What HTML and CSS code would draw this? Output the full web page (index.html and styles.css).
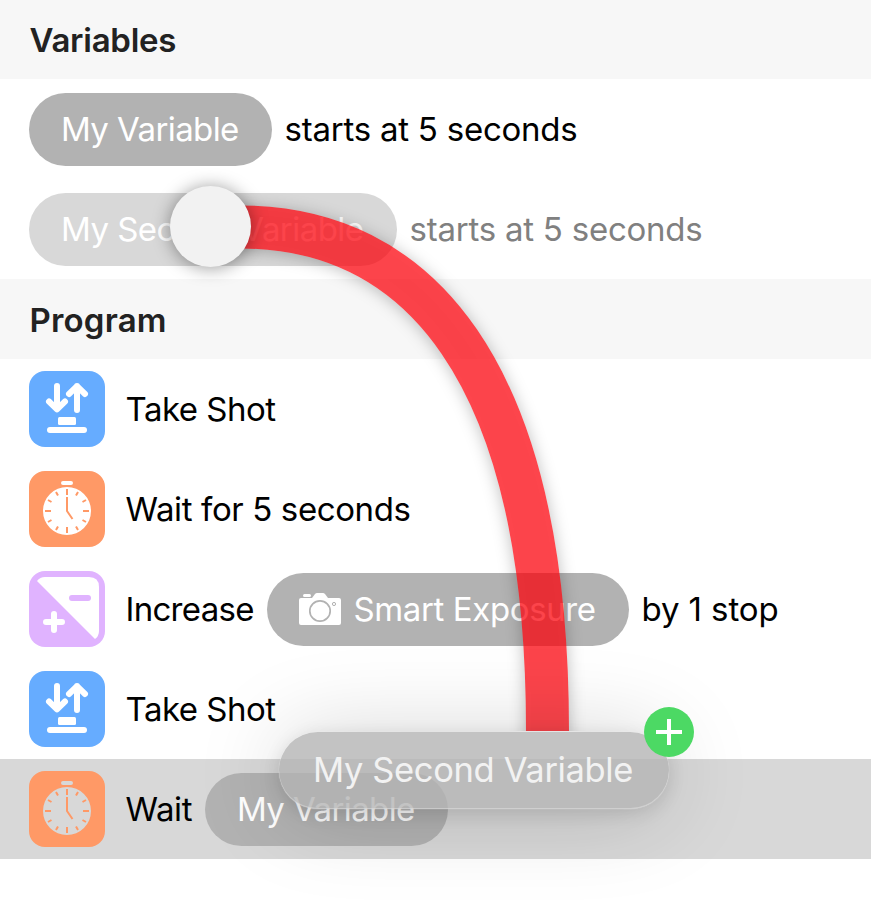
FILE: index.html
```html
<!DOCTYPE html>
<html lang="en">
<head>
<meta charset="utf-8">
<title>Variables</title>
<link rel="stylesheet" href="styles.css">
</head>
<body>
<svg class="defs" aria-hidden="true">
  <symbol id="shot" viewBox="0 0 76 76">
    <rect width="76" height="76" rx="16" fill="#66acff"/>
    <path d="M28 15v23M20 30.500L28 38.300L36 30.500M48 39V15M40 23L48 15.200L56 23" fill="none" stroke="#fff" stroke-width="6" stroke-linecap="round" stroke-linejoin="round"/>
    <rect x="29" y="46" width="18" height="8" rx="1.500" fill="#fff"/>
    <rect x="18" y="56" width="40" height="6" rx="3" fill="#fff"/>
  </symbol>
  <symbol id="timer" viewBox="0 0 76 76">
    <path fill="#ff9966" fill-rule="evenodd" d="M16 0H60A16 16 0 0 1 76 16V60A16 16 0 0 1 60 76H16A16 16 0 0 1 0 60V16A16 16 0 0 1 16 0ZM34 10a2 2 0 0 0 0 4h8a2 2 0 0 0 0-4ZM14 40a24 24 0 1 0 48 0a24 24 0 1 0-48 0Z"/>
    <g stroke="#ff9966" stroke-width="2" fill="none">
      <path d="M38 18v6M38 56v6M16 40h6M54 40h6"/>
      <path d="M27 21l2 3.500M49 21l-2 3.500M19 29l3.500 2M57 29l-3.500 2M19 51l3.500-2M57 51l-3.500-2M27 59l2-3.500M49 59l-2-3.500"/>
      <path d="M38 26V40L43.500 48" stroke-linejoin="round"/>
    </g>
  </symbol>
  <symbol id="exposure" viewBox="0 0 76 76">
    <rect width="76" height="76" rx="16" fill="#e0b3ff"/>
    <path d="M8 10Q11 6 16 6H60Q70 6 70 16V60Q70 65 66 68Z" fill="#fff"/>
    <path d="M43 27H59" stroke="#e0b3ff" stroke-width="6" stroke-linecap="round"/>
    <path d="M17 51H33M25 43V59" stroke="#fff" stroke-width="6" stroke-linecap="round"/>
  </symbol>
</svg>
<main class="screen">
  <h2 class="header">Variables</h2>
  <div class="row">
    <span class="pill pill-short"><span class="t-var">My Variable</span></span>
    <span class="label after t-start">starts at 5 seconds</span>
  </div>
  <div class="row lifted">
    <span class="pill pill-long"><span class="t-second">My Second Variable</span></span>
    <span class="label after t-start">starts at 5 seconds</span>
  </div>
  <h2 class="header program">Program</h2>
  <div class="row"><svg class="icon"><use href="#shot"/></svg><span class="label t-shot">Take Shot</span></div>
  <div class="row"><svg class="icon"><use href="#timer"/></svg><span class="label t-wait5">Wait for 5 seconds</span></div>
  <div class="row">
    <svg class="icon"><use href="#exposure"/></svg><span class="label t-inc">Increase</span>
    <span class="pill pill-smart">
      <svg class="camera" viewBox="0 0 42 32">
        <path fill="#fff" d="M2 5H13L16 1Q17 0 18 0H24Q25 0 26 1L29 5H40Q42 5 42 7V30Q42 32 40 32H2Q0 32 0 30V7Q0 5 2 5Z"/>
        <rect x="4" y="1" width="8" height="3" rx="1.500" fill="#fff"/>
        <circle cx="21" cy="18" r="10.200" fill="none" stroke="#b2b2b2" stroke-width="1.700"/>
        <circle cx="35" cy="11" r="1.600" fill="none" stroke="#b2b2b2" stroke-width="1"/>
      </svg>
      <span class="t-smart">Smart Exposure</span>
    </span>
    <span class="label after t-by">by 1 stop</span>
  </div>
  <div class="row"><svg class="icon"><use href="#shot"/></svg><span class="label t-shot">Take Shot</span></div>
  <div class="row target"><svg class="icon"><use href="#timer"/></svg><span class="label t-wait">Wait</span><span class="pill pill-short"><span class="t-var">My Variable</span></span></div>

  <svg class="trail" viewBox="0 0 871 914">
    <defs>
      <filter id="soft" x="-20%" y="-20%" width="140%" height="140%"><feGaussianBlur stdDeviation="8"/></filter>
      <clipPath id="above"><path d="M0 0H871V731H0Z"/></clipPath>
      <mask id="outside" maskUnits="userSpaceOnUse" x="0" y="0" width="871" height="914">
        <rect width="871" height="914" fill="#fff"/>
        <path d="M210 227H240C415 227 547.500 365 547.500 731V750" fill="none" stroke="#333" stroke-width="43"/>
      </mask>
    </defs>
    <g clip-path="url(#above)" fill="none" stroke-width="43">
      <g mask="url(#outside)"><path d="M210 229H240C415 229 547.500 367 547.500 731V750" stroke="#000" stroke-opacity=".25" filter="url(#soft)"/></g>
      <path d="M210 227H240C415 227 547.500 365 547.500 731" stroke="#ff000a" stroke-opacity=".72"/>
    </g>
  </svg>
  <div class="touch"></div>
  <div class="drag"><span class="t-drag">My Second Variable</span>
    <svg class="badge" viewBox="0 0 50 50"><circle cx="25" cy="25" r="25" fill="#4cd964"/><path d="M12 25H38M25 12V38" stroke="#fff" stroke-width="4"/></svg>
  </div>
</main>
</body>
</html>
```
FILE: styles.css
```css
* { box-sizing: border-box; }
body { margin: 0; background: #fff; }
.defs { position: absolute; width: 0; height: 0; }
.screen {
  position: relative;
  width: 871px;
  height: 914px;
  overflow: hidden;
  font: 400 33px/40px Inter, "Liberation Sans", sans-serif;
  color: #000;
  white-space: nowrap;
}
.header {
  margin: 0;
  height: 79px;
  padding: 20px 29.500px 0;
  background: #f7f7f7;
  color: #222;
  font-size: 33px;
  line-height: 40px;
  font-weight: 600;
  letter-spacing: -.25px;
}
.program { height: 80px; padding-top: 21px; letter-spacing: .2px; }
.row { display: flex; align-items: center; height: 100px; padding-left: 29px; }
.lifted .pill { background: #d8d8d8; }
.lifted .label { color: #808080; }
.target { background: #d8d8d8; }
.icon { width: 76px; height: 76px; flex: none; margin-right: 20.500px; }
.pill {
  display: flex;
  align-items: center;
  flex: none;
  height: 73px;
  padding-left: 32px;
  border-radius: 37px;
  background: #b2b2b2;
  color: #fff;
}
.pill-short { width: 243px; }
.pill-long { width: 368px; }
.pill-smart { width: 362px; }
.camera { width: 42px; height: 32px; margin-right: 12.500px; flex: none; }
.after { margin-left: 12.500px; }
.t-start { letter-spacing: -.23px; }
.t-shot { letter-spacing: -.5px; }
.t-wait5 { letter-spacing: -.38px; }
.t-inc { width: 141.500px; letter-spacing: -.7px; }
.t-wait { width: 79.500px; letter-spacing: -.4px; }
.t-by { letter-spacing: -.1px; }
.t-var { letter-spacing: -.6px; }
.t-second { letter-spacing: -.55px; }
.t-smart { letter-spacing: -.38px; }
.t-drag { letter-spacing: -.36px; }
.trail { position: absolute; left: 0; top: 0; width: 871px; height: 914px; }
.touch {
  position: absolute;
  left: 169.500px;
  top: 185.500px;
  width: 81px;
  height: 81px;
  border-radius: 50%;
  background: #f2f2f2;
  box-shadow: 0 1px 18px rgba(0, 0, 0, .4);
}
.drag {
  position: absolute;
  left: 279px;
  top: 732px;
  width: 390px;
  height: 77px;
  padding: 18px 0 0 34px;
  border-radius: 39px;
  background: rgba(178, 178, 178, .78);
  color: #f2f2f2;
  font-size: 34.500px;
  box-shadow: inset 0 -1px 0 rgba(255, 255, 255, .3), 0 0 1px rgba(255, 255, 255, .9), 0 4px 18px rgba(0, 0, 0, .12), 0 4px 90px rgba(0, 0, 0, .18);
}
.badge { position: absolute; left: 365px; top: -25px; width: 50px; height: 50px; }
```
